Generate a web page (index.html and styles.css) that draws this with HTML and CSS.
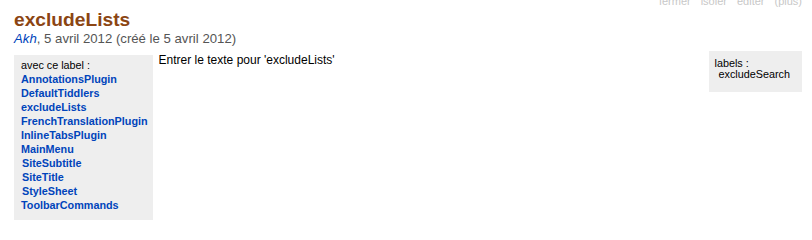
FILE: index.html
```html
<!DOCTYPE html>
<html lang="fr">
<head>
<meta charset="utf-8">
<title>excludeLists</title>
<link rel="stylesheet" href="styles.css">
</head>
<body>
<div class="tiddler">
  <div class="toolbar">
    <a class="cmd">fermer</a><a class="cmd">isoler</a><a class="cmd">editer</a><a class="cmd">(plus)</a>
  </div>
  <div class="title">excludeLists</div>
  <div class="subtitle"><a class="author">Akh</a>, 5 avril 2012 (créé le 5 avril 2012)</div>
  <div class="body-row">
    <div class="tagging">
      <ul>
        <li class="list-title">avec ce label :</li>
        <li><a class="tiddlylink">AnnotationsPlugin</a></li>
        <li><a class="tiddlylink">DefaultTiddlers</a></li>
        <li><a class="tiddlylink">excludeLists</a></li>
        <li><a class="tiddlylink">FrenchTranslationPlugin</a></li>
        <li><a class="tiddlylink">InlineTabsPlugin</a></li>
        <li><a class="tiddlylink">MainMenu</a></li>
        <li><a class="tiddlylink shadow">SiteSubtitle</a></li>
        <li><a class="tiddlylink shadow">SiteTitle</a></li>
        <li><a class="tiddlylink shadow">StyleSheet</a></li>
        <li><a class="tiddlylink">ToolbarCommands</a></li>
      </ul>
    </div>
    <div class="viewer">Entrer le texte pour 'excludeLists'</div>
    <div class="tagged">
      <ul>
        <li class="list-title">labels :</li>
        <li class="tag-item">excludeSearch</li>
      </ul>
    </div>
  </div>
</div>
</body>
</html>
```
FILE: styles.css
```css
html, body {
  margin: 0;
  padding: 0;
  background: #ffffff;
}

body {
  font-family: "Liberation Sans", Arial, sans-serif;
  font-size: 12px;
  color: #000000;
}

.tiddler {
  padding: 0 10px 0 14px;
}

.toolbar {
  margin-top: -5px;
  height: 12px;
  line-height: 12px;
  font-size: 11px;
  text-align: right;
  color: #c8c8c8;
  white-space: nowrap;
}

.toolbar .cmd {
  padding: 0 0 0 10px;
}

.title {
  margin-top: 2px;
  font-size: 19.2px;
  line-height: 22px;
  font-weight: bold;
  color: #8b4513;
}

.subtitle {
  font-size: 13.2px;
  line-height: 16px;
  color: #555555;
}

.author {
  font-style: italic;
  color: #0044bb;
}

.body-row {
  margin-top: 4px;
  display: flex;
  align-items: flex-start;
}

.tagging,
.tagged {
  background: #eeeeee;
  font-size: 10.8px;
}

.tagging ul,
.tagged ul {
  list-style: none;
  margin: 0;
  padding: 0;
}

.tagging li,
.tagged li {
  white-space: nowrap;
}

.tagging {
  margin-top: 4px;
  padding: 3px 5px 8px 7px;
  line-height: 14px;
}

.tiddlylink {
  font-weight: bold;
  color: #0044bb;
}

.tiddlylink.shadow {
  padding-left: 1px;
}

.viewer {
  flex: 1;
  margin: 2px 0 0 6px;
  line-height: 14px;
}

.tagged {
  padding: 7px 12px 12px 6px;
  line-height: 11px;
}

.tag-item {
  padding-left: 4px;
}
```
